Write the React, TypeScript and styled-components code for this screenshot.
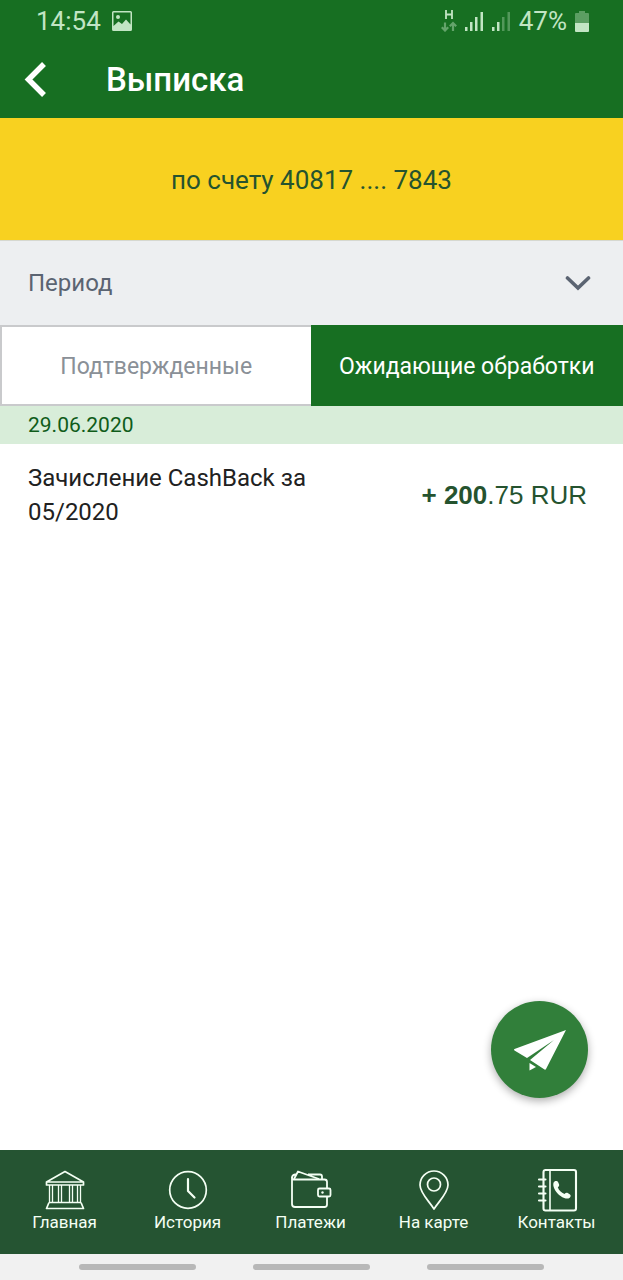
import React from "react";
import styled, { createGlobalStyle } from "styled-components";

const GlobalStyle = createGlobalStyle`
  *, *::before, *::after { box-sizing: border-box; }
  body { margin: 0; background: #ffffff; font-family: Roboto, "Noto Sans", sans-serif; }
  button { font: inherit; border: 0; padding: 0; margin: 0; cursor: pointer; }
  svg { display: block; flex: none; }
`;

const Screen = styled.div`
  min-height: 100vh;
  display: flex;
  flex-direction: column;
`;

const StatusBar = styled.div`
  display: flex;
  justify-content: space-between;
  height: 42px;
  padding: 0 34px 0 36px;
  background: #176f22;
  color: #c2e5c4;
  font-size: 26px;
  line-height: 32px;
`;

const StatusGroup = styled.div<{ $gap: number }>`
  display: flex;
  align-items: center;
  gap: ${(p) => p.$gap}px;
  height: 42px;
`;

const TitleBar = styled.header`
  display: flex;
  align-items: center;
  gap: 58px;
  height: 76px;
  padding: 0 24px;
  background: #176f22;
  color: #ffffff;
`;

const BackButton = styled.button`
  display: flex;
  background: none;
  color: inherit;
`;

const Title = styled.h1`
  margin: 0;
  font-size: 33px;
  line-height: 40px;
  font-weight: 500;
`;

const Account = styled.div`
  display: flex;
  align-items: center;
  justify-content: center;
  height: 122px;
  padding-top: 2px;
  background: #f8d120;
  color: #25532f;
  font-size: 26px;
  line-height: 32px;
`;

const PeriodButton = styled.button`
  display: flex;
  align-items: center;
  justify-content: space-between;
  width: 100%;
  height: 85px;
  padding: 0 32px 0 28px;
  border-top: 1px solid #d6d8d0;
  background: #edeff1;
  color: #5b6472;
  font-size: 24px;
  line-height: 32px;
`;

const Tabs = styled.div`
  display: flex;
`;

const Tab = styled.button<{ $active?: boolean }>`
  flex: 1;
  height: 81px;
  padding-top: 2px;
  border: 2px solid ${(p) => (p.$active ? "#176f22" : "#c9cacc")};
  border-right-width: ${(p) => (p.$active ? 2 : 0)}px;
  background: ${(p) => (p.$active ? "#176f22" : "#ffffff")};
  color: ${(p) => (p.$active ? "#ffffff" : "#8a9097")};
  font-size: 23px;
  line-height: 32px;
`;

const Content = styled.main`
  position: relative;
  flex: 1;
`;

const DateHeading = styled.h2`
  margin: 0;
  padding: 3px 28px;
  background: #d8edd9;
  color: #0f5c1a;
  font-size: 21px;
  line-height: 32px;
  font-weight: 400;
`;

const Operations = styled.ul`
  margin: 0;
  padding: 0;
  list-style: none;
`;

const Operation = styled.li`
  display: flex;
  align-items: center;
  justify-content: space-between;
  gap: 24px;
  padding: 17px 36px 17px 28px;
`;

const Description = styled.p`
  flex: 0 1 300px;
  margin: 0;
  color: #212121;
  font-size: 24px;
  line-height: 34px;
`;

const Amount = styled.span`
  color: #25532f;
  font-family: "Liberation Sans", Arial, sans-serif;
  font-size: 26px;
  line-height: 34px;
  white-space: nowrap;
`;

const SendButton = styled.button`
  position: absolute;
  right: 35px;
  bottom: 52px;
  display: flex;
  align-items: center;
  justify-content: center;
  width: 97px;
  height: 97px;
  border-radius: 50%;
  background: #317f3a;
  color: #ffffff;
  box-shadow: 0 3px 8px rgba(0, 0, 0, 0.32);
`;

const BottomNav = styled.nav`
  display: flex;
  height: 104px;
  padding: 18px 5px 0 3px;
  background: #255432;
`;

const NavItem = styled.a`
  flex: 1;
  display: flex;
  flex-direction: column;
  align-items: center;
  color: #f4fff4;
  font-size: 17px;
  line-height: 20px;
  text-decoration: none;
  white-space: nowrap;
`;

const NavIcon = styled.span`
  display: flex;
  height: 44px;
`;

const SystemBar = styled.div`
  display: flex;
  align-items: center;
  height: 26px;
  padding: 0 50px;
  background: #f1f1f1;
`;

const SystemSlot = styled.div`
  flex: 1;
  display: flex;
  justify-content: center;
`;

const SystemHandle = styled.div`
  width: 117px;
  height: 6px;
  border-radius: 3px;
  background: #b8b8b8;
`;

const PictureIcon = () => (
  <svg width="20" height="20" viewBox="0 0 20 20" aria-hidden="true">
    <path
      fill="currentColor"
      fillRule="evenodd"
      d="M1.5 0h17A1.5 1.5 0 0 1 20 1.5v17a1.5 1.5 0 0 1-1.5 1.5h-17A1.5 1.5 0 0 1 0 18.5v-17A1.5 1.5 0 0 1 1.5 0ZM1.5 1.5V15l5-4.500 3.500 2.500 4-4.500 4.500 5V1.5ZM6 4a2 2 0 1 1 0 4 2 2 0 0 1 0-4Z"
    />
  </svg>
);

const DataIcon = () => (
  <svg width="16" height="22" viewBox="0 0 16 22" fill="none" stroke="currentColor" aria-hidden="true">
    <path strokeWidth="1.8" d="M5 0v9M11 0v9M5 4.5h6" />
    <g strokeWidth="2.2" opacity="0.45">
      <path d="M4 12.5v8M0.8 17.2L4 20.5l3.2-3.3" />
      <path d="M12 21v-8M8.8 16.3L12 13l3.2 3.3" />
    </g>
  </svg>
);

const SignalIcon = ({ weak = false }: { weak?: boolean }) => (
  <svg width="19" height="20" viewBox="0 0 19 20" fill="currentColor" aria-hidden="true">
    <rect x="0" y="16" width="2.5" height="4" />
    <rect x="5" y="11" width="2.5" height="9" />
    <rect x="10" y="6" width="2.5" height="14" opacity={weak ? 0.35 : 1} />
    <rect x="15.5" y="1" width="2.5" height="19" opacity={weak ? 0.35 : 1} />
  </svg>
);

const BatteryIcon = () => (
  <svg width="14" height="21" viewBox="0 0 14 21" fill="currentColor" aria-hidden="true">
    <path opacity="0.4" d="M4 0h6v2h3a1 1 0 0 1 1 1v9H0V3a1 1 0 0 1 1-1h3Z" />
    <path d="M0 12h14v8a1 1 0 0 1-1 1H1a1 1 0 0 1-1-1Z" />
  </svg>
);

const BackIcon = () => (
  <svg width="24" height="36" viewBox="0 0 24 36" fill="none" stroke="currentColor" aria-hidden="true">
    <path strokeWidth="5.5" d="M20 2L4.500 17.500 20 33" />
  </svg>
);

const ChevronIcon = () => (
  <svg width="26" height="16" viewBox="0 0 26 16" fill="none" stroke="currentColor" aria-hidden="true">
    <path strokeWidth="3.6" strokeLinecap="round" d="M2.500 3L13 13 23.500 3" />
  </svg>
);

const PlaneIcon = () => (
  <svg width="54" height="42" viewBox="0 0 54 42" fill="currentColor" aria-hidden="true">
    <path d="M53 1L1.500 20q-1.200.6 0 1.400L14 29 41 11 17 31 31.500 40.500q1 .5 1.500-.5Z" />
    <path d="M16.500 34v7.500l6.500-3.500Z" />
  </svg>
);

const BankIcon = () => (
  <svg width="44" height="42" viewBox="0 0 44 42" fill="none" stroke="currentColor" strokeWidth="1.7" strokeLinejoin="round" aria-hidden="true">
    <path d="M3.500 14L22 3.500 40.500 14v3h-37ZM3.500 14h37" />
    <path d="M6.500 17v17.500M9.500 17v17.500M15.500 17v17.500M18.500 17v17.500M26.500 17v17.500M29.500 17v17.500M34.500 17v17.500M37.500 17v17.500" strokeWidth="1.3" />
    <path d="M6 34.500h32M6 34.500l-2.500 6h37l-2.500-6" />
  </svg>
);

const ClockIcon = () => (
  <svg width="44" height="42" viewBox="0 0 44 42" fill="none" stroke="currentColor" strokeLinecap="round" strokeLinejoin="round" aria-hidden="true">
    <circle cx="22" cy="22" r="18.3" strokeWidth="1.7" />
    <path d="M22 11v12l6.500 6.500" strokeWidth="2.2" />
  </svg>
);

const WalletIcon = () => (
  <svg width="44" height="42" viewBox="0 0 44 42" fill="none" stroke="currentColor" strokeWidth="1.8" strokeLinejoin="round" aria-hidden="true">
    <path d="M38 20.500V14a2.500 2.500 0 0 0-2.500-2.500H4.500A1.800 1.800 0 0 1 3 9.800V36a3 3 0 0 0 3 3h29.500a2.500 2.500 0 0 0 2.500-2.500v-8" />
    <path d="M3 10a3.500 3.500 0 0 1 3-3.500h2M5 11l4-7.500 21 7.500M19 6.500h12a2 2 0 0 1 2 2v3" />
    <rect x="29" y="20.500" width="12.500" height="8" rx="1.5" />
    <circle cx="33.500" cy="24.500" r="1.2" fill="currentColor" stroke="none" />
  </svg>
);

const PinIcon = () => (
  <svg width="44" height="42" viewBox="0 0 44 42" fill="none" stroke="currentColor" strokeWidth="1.7" strokeLinejoin="round" aria-hidden="true">
    <path d="M22 41C17 33 8 25 8 17a14 14 0 0 1 28 0c0 8-9 16-14 24Z" />
    <circle cx="22" cy="16.500" r="6.500" />
  </svg>
);

const ContactsIcon = () => (
  <svg width="44" height="44" viewBox="0 0 44 44" fill="none" stroke="currentColor" strokeWidth="2.1" strokeLinejoin="round" aria-hidden="true">
    <rect x="8.500" y="2" width="32.500" height="40.500" rx="2" />
    <path d="M15 2v40.500" strokeWidth="1.6" />
    <path d="M4 11.500h6.500M4 18.500h6.500M4 25.500h6.500M4 32.500h6.500" strokeLinecap="round" />
    <path
      fill="currentColor"
      stroke="none"
      d="M19.500 13.500c1.500-.8 3-.5 3.800 1l.8 2c.4 1.200-.3 2-1.300 2.800 1 3 3.500 5.500 6.700 6.700 1-1 2-1.500 3.200-1l2 1.200c1.500 1 1 2.500 0 3.500-1.500 1.200-3.500 1-5.500.3-5-2-9-6.300-10.500-11-.6-2-.8-4.500.8-5.500Z"
    />
  </svg>
);

const navItems = [
  { label: "Главная", icon: <BankIcon /> },
  { label: "История", icon: <ClockIcon /> },
  { label: "Платежи", icon: <WalletIcon /> },
  { label: "На карте", icon: <PinIcon /> },
  { label: "Контакты", icon: <ContactsIcon /> },
];

export default function App() {
  return (
    <Screen>
      <GlobalStyle />
      <StatusBar>
        <StatusGroup $gap={11}>
          <span>14:54</span>
          <PictureIcon />
        </StatusGroup>
        <StatusGroup $gap={8}>
          <DataIcon />
          <SignalIcon />
          <SignalIcon weak />
          <span>47%</span>
          <BatteryIcon />
        </StatusGroup>
      </StatusBar>
      <TitleBar>
        <BackButton type="button" aria-label="Назад">
          <BackIcon />
        </BackButton>
        <Title>Выписка</Title>
      </TitleBar>
      <Account>по счету 40817 .... 7843</Account>
      <PeriodButton type="button" aria-expanded="false">
        <span>Период</span>
        <ChevronIcon />
      </PeriodButton>
      <Tabs role="tablist">
        <Tab type="button" role="tab" aria-selected="false">Подтвержденные</Tab>
        <Tab type="button" role="tab" aria-selected="true" $active>Ожидающие обработки</Tab>
      </Tabs>
      <Content>
        <DateHeading>29.06.2020</DateHeading>
        <Operations>
          <Operation>
            <Description>Зачисление CashBack за 05/2020</Description>
            <Amount>
              <b>+ 200</b>.75 RUR
            </Amount>
          </Operation>
        </Operations>
        <SendButton type="button" aria-label="Отправить">
          <PlaneIcon />
        </SendButton>
      </Content>
      <BottomNav>
        {navItems.map((item) => (
          <NavItem key={item.label} href="#">
            <NavIcon>{item.icon}</NavIcon>
            {item.label}
          </NavItem>
        ))}
      </BottomNav>
      <SystemBar>
        {[0, 1, 2].map((slot) => (
          <SystemSlot key={slot}>
            <SystemHandle />
          </SystemSlot>
        ))}
      </SystemBar>
    </Screen>
  );
}
